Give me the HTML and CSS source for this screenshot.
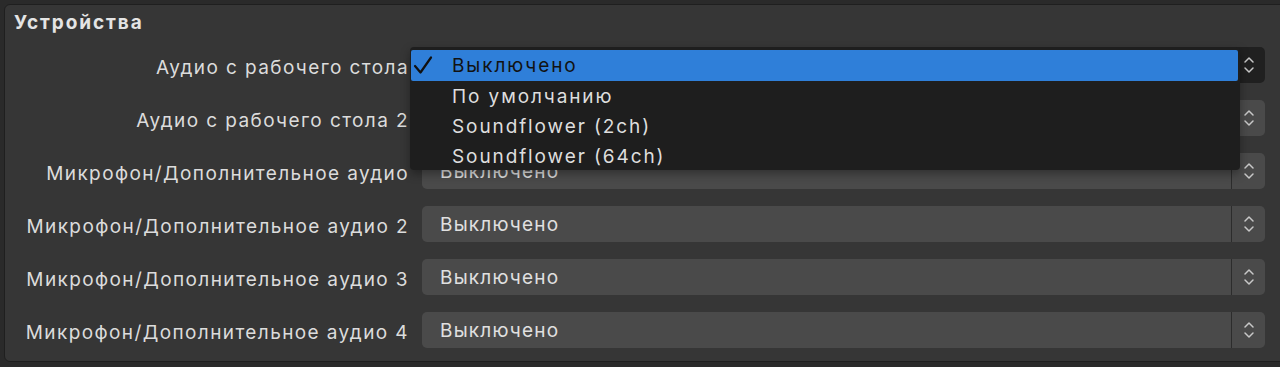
FILE: index.html
```html
<!DOCTYPE html>
<html lang="ru">
<head>
  <meta charset="UTF-8" />
  <meta name="viewport" content="width=device-width, initial-scale=1.0"/>
  <title>Устройства</title>
  <link rel="stylesheet" href="styles.css">
</head>
<body>

<div class="group">
  <div class="group-title">Устройства</div>

  <div class="form">
    <label class="label">Аудио с рабочего стола</label>
    <div class="combo open">
      <span class="combo-value">Выключено</span>
      <span class="combo-arrows">
        <svg width="12" height="20" viewBox="0 0 12 20"><path d="M2 7 L6 3 L10 7 M2 13 L6 17 L10 13" fill="none" stroke="#c8c8c8" stroke-width="1.5" stroke-linecap="round" stroke-linejoin="round"/></svg>
      </span>

      <!-- open popup menu -->
      <div class="popup">
        <div class="popup-item selected">
          <svg class="check" width="22" height="22" viewBox="0 0 22 22"><path d="M3 12 L8.5 18.5 L19 3.5" fill="none" stroke="#111" stroke-width="2.2" stroke-linecap="round" stroke-linejoin="round"/></svg>
          <span>Выключено</span>
        </div>
        <div class="popup-item"><span>По умолчанию</span></div>
        <div class="popup-item"><span>Soundflower (2ch)</span></div>
        <div class="popup-item"><span>Soundflower (64ch)</span></div>
      </div>
    </div>

    <label class="label">Аудио с рабочего стола 2</label>
    <div class="combo">
      <span class="combo-value">Выключено</span>
      <span class="combo-arrows">
        <svg width="12" height="20" viewBox="0 0 12 20"><path d="M2 7 L6 3 L10 7 M2 13 L6 17 L10 13" fill="none" stroke="#c8c8c8" stroke-width="1.5" stroke-linecap="round" stroke-linejoin="round"/></svg>
      </span>
    </div>

    <label class="label">Микрофон/Дополнительное аудио</label>
    <div class="combo">
      <span class="combo-value">Выключено</span>
      <span class="combo-arrows">
        <svg width="12" height="20" viewBox="0 0 12 20"><path d="M2 7 L6 3 L10 7 M2 13 L6 17 L10 13" fill="none" stroke="#c8c8c8" stroke-width="1.5" stroke-linecap="round" stroke-linejoin="round"/></svg>
      </span>
    </div>

    <label class="label">Микрофон/Дополнительное аудио 2</label>
    <div class="combo">
      <span class="combo-value">Выключено</span>
      <span class="combo-arrows">
        <svg width="12" height="20" viewBox="0 0 12 20"><path d="M2 7 L6 3 L10 7 M2 13 L6 17 L10 13" fill="none" stroke="#c8c8c8" stroke-width="1.5" stroke-linecap="round" stroke-linejoin="round"/></svg>
      </span>
    </div>

    <label class="label">Микрофон/Дополнительное аудио 3</label>
    <div class="combo">
      <span class="combo-value">Выключено</span>
      <span class="combo-arrows">
        <svg width="12" height="20" viewBox="0 0 12 20"><path d="M2 7 L6 3 L10 7 M2 13 L6 17 L10 13" fill="none" stroke="#c8c8c8" stroke-width="1.5" stroke-linecap="round" stroke-linejoin="round"/></svg>
      </span>
    </div>

    <label class="label">Микрофон/Дополнительное аудио 4</label>
    <div class="combo">
      <span class="combo-value">Выключено</span>
      <span class="combo-arrows">
        <svg width="12" height="20" viewBox="0 0 12 20"><path d="M2 7 L6 3 L10 7 M2 13 L6 17 L10 13" fill="none" stroke="#c8c8c8" stroke-width="1.5" stroke-linecap="round" stroke-linejoin="round"/></svg>
      </span>
    </div>
  </div>
</div>

</body>
</html>
```

FILE: styles.css
```css
body {
  margin: 0;
  padding: 4px 0 0 4px;
  font-family: Inter, 'Liberation Sans', sans-serif;
  letter-spacing: 1.2px;
  background-color: #2a2a2a;
  color: #dedede;
  overflow: hidden;
  height: 367px;
  box-sizing: border-box;
}

/* Group box */
.group {
  background: #363636;
  border: 1px solid #1f1f1f;
  border-radius: 6px;
  margin-right: -20px;
  height: 358px;
  box-sizing: border-box;
}

.group-title {
  font-size: 19px;
  font-weight: bold;
  letter-spacing: 1.9px;
  color: #e4e4e4;
  padding: 6px 0 0 9px;
  line-height: 23px;
}

.form {
  display: grid;
  grid-template-columns: 403px 843px;
  column-gap: 14px;
  row-gap: 17px;
  margin-top: 13px;
}

.label {
  font-size: 19px;
  letter-spacing: 1.4px;
  text-align: right;
  align-self: center;
  white-space: nowrap;
  padding-top: 4px;
  margin-right: -1px;
  color: #dcdcdc;
}

/* Combo box */
.combo {
  position: relative;
  height: 36px;
  display: flex;
  background: #4a4a4a;
  border-radius: 5px;
}

.combo-value {
  flex: 1;
  font-size: 19px;
  line-height: 36px;
  padding-left: 18px;
  padding-top: 1px;
  color: #e0e0e0;
  border-right: 1px solid #2c2c2c;
}

.combo-arrows {
  width: 33px;
  display: flex;
  align-items: center;
  justify-content: center;
}

.combo.open {
  background: #202020;
  z-index: 5;
}

/* Popup menu */
.popup {
  position: absolute;
  z-index: 10;
  left: -12px;
  top: 0;
  width: 830px;
  height: 123px;
  box-sizing: border-box;
  padding: 3px 2px 0 1px;
  background: #1e1e1e;
  border-radius: 4px;
  box-shadow: 0 4px 10px rgba(0, 0, 0, 0.35);
}

.popup-item {
  display: flex;
  align-items: center;
  height: 30px;
  padding-left: 41px;
  font-size: 19px;
  letter-spacing: 1.9px;
  color: #dedede;
}

.popup-item.selected {
  position: relative;
  height: 31px;
  background: #2f7fd9;
  color: #121212;
  border-radius: 2px;
}

.check {
  position: absolute;
  left: 1px;
  top: 4px;
}
```
